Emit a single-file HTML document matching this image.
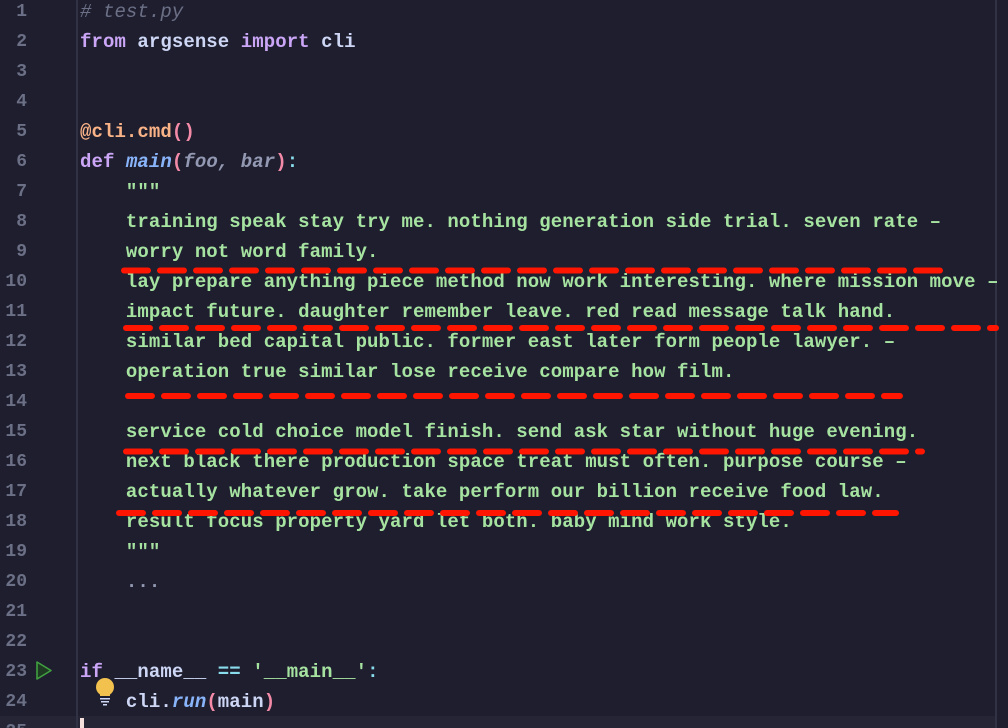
<!DOCTYPE html>
<html><head><meta charset="utf-8"><style>
html,body{margin:0;padding:0;background:#1e1e2e;width:1008px;height:728px;overflow:hidden}
body{position:relative;font-family:"Liberation Mono",monospace;font-size:19px;font-weight:bold}
.ln{position:absolute;left:0;width:27px;text-align:right;color:#6c7086;font-size:18px;font-weight:bold}
.cd{position:absolute;left:80px;color:#cdd6f4;letter-spacing:0.08px}
.row{height:30px;line-height:30px;white-space:pre}
.g{color:#a6e3a1}.k{color:#cba6f7}.p{color:#fab387}.r{color:#f38ba8}.b{color:#89b4fa;font-style:italic}.c{color:#6c7086;font-style:italic;font-weight:normal}.i{color:#9399b2;font-style:italic}.t{color:#89dceb}.d{color:#9399b2}
#sep{position:absolute;left:76px;top:0;width:2px;height:728px;background:#313244}
#rb{position:absolute;left:995px;top:0;width:2px;height:728px;background:#313244}
#cur{position:absolute;left:0;top:716px;width:995px;height:14px;background:#252536}
</style></head><body>
<div id="cur"></div>
<div id="sep"></div><div id="rb"></div>
<div class="ln" style="top:-3px"><div class="row">1</div><div class="row">2</div><div class="row">3</div><div class="row">4</div><div class="row">5</div><div class="row">6</div><div class="row">7</div><div class="row">8</div><div class="row">9</div><div class="row">10</div><div class="row">11</div><div class="row">12</div><div class="row">13</div><div class="row">14</div><div class="row">15</div><div class="row">16</div><div class="row">17</div><div class="row">18</div><div class="row">19</div><div class="row">20</div><div class="row">21</div><div class="row">22</div><div class="row">23</div><div class="row">24</div><div class="row">25</div></div>
<div class="cd" style="top:-3px"><div class="row"><span class="c"># test.py</span></div><div class="row"><span class="k">from</span> argsense <span class="k">import</span> cli</div><div class="row"> </div><div class="row"> </div><div class="row"><span class="p">@cli.cmd</span><span class="r">()</span></div><div class="row"><span class="k">def</span> <span class="b">main</span><span class="r">(</span><span class="i">foo, bar</span><span class="r">)</span><span class="t">:</span></div><div class="row g">    """</div><div class="row g">    training speak stay try me. nothing generation side trial. seven rate –</div><div class="row g">    worry not word family.</div><div class="row g">    lay prepare anything piece method now work interesting. where mission move –</div><div class="row g">    impact future. daughter remember leave. red read message talk hand.</div><div class="row g">    similar bed capital public. former east later form people lawyer. –</div><div class="row g">    operation true similar lose receive compare how film.</div><div class="row"> </div><div class="row g">    service cold choice model finish. send ask star without huge evening.</div><div class="row g">    next black there production space treat must often. purpose course –</div><div class="row g">    actually whatever grow. take perform our billion receive food law.</div><div class="row g">    result focus property yard let both. baby mind work style.</div><div class="row g">    """</div><div class="row d">    ...</div><div class="row"> </div><div class="row"> </div><div class="row"><span class="k">if</span> __name__ <span class="t">==</span> <span class="g">'__main__'</span><span class="t">:</span></div><div class="row">    cli.<span class="b">run</span><span class="r">(</span>main<span class="r">)</span></div></div>
<svg style="position:absolute;left:0;top:0" width="1008" height="728">
<g stroke="#ff1500" stroke-width="6" stroke-linecap="round" stroke-dasharray="24 12" fill="none">
<line x1="124" y1="270.5" x2="942" y2="270.5"/>
<line x1="126" y1="328" x2="996" y2="328"/>
<line x1="128" y1="396" x2="900" y2="396"/>
<line x1="126" y1="451.5" x2="922" y2="451.5"/>
<line x1="119" y1="513" x2="896" y2="513"/>
</g>
<path d="M37 662 L51 670.5 L37 679 Z" fill="#1f3a22" stroke="#40a040" stroke-width="1.6" stroke-linejoin="round"/>
<circle cx="105" cy="687" r="9" fill="#f2c14e"/>
<rect x="100" y="692" width="10" height="4" fill="#f2c14e"/>
<rect x="100" y="698" width="10" height="1.5" fill="#cdd6f4"/>
<rect x="101" y="701" width="8" height="1.5" fill="#cdd6f4"/>
<rect x="103" y="704" width="4" height="1.5" fill="#cdd6f4"/>
<rect x="80" y="718" width="4" height="10" fill="#f5e0dc"/>
</svg>
</body></html>
